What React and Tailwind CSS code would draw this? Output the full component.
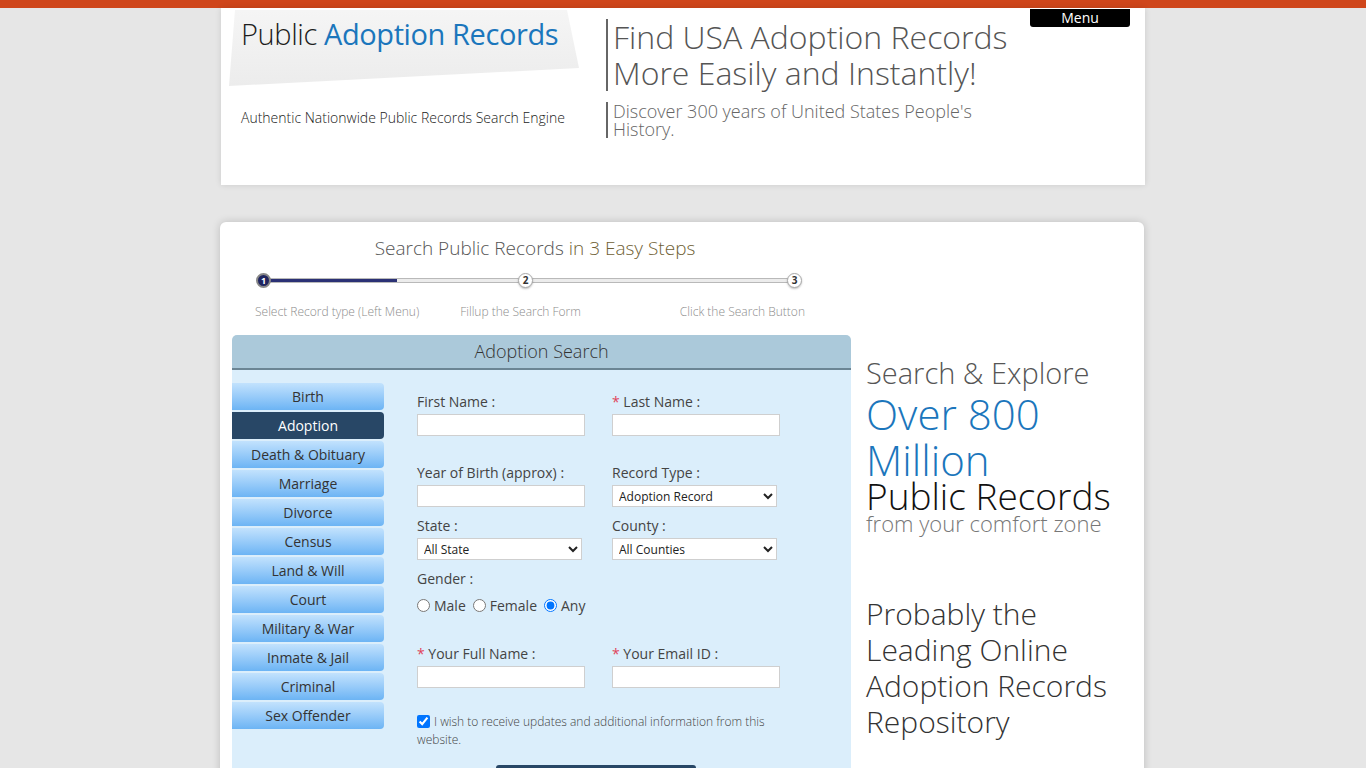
import React from 'react'

const menuItems = [
  'Birth',
  'Adoption',
  'Death & Obituary',
  'Marriage',
  'Divorce',
  'Census',
  'Land & Will',
  'Court',
  'Military & War',
  'Inmate & Jail',
  'Criminal',
  'Sex Offender',
]

const Label = ({ children, required }) => (
  <div className="h-[20px] text-[14px] leading-[20px] text-[#444]">
    {required && <span className="text-[#e0435a]">* </span>}
    {children}
  </div>
)

const Input = () => (
  <input type="text" className="mt-[2px] block h-[22px] w-[168px] border border-[#cfcfcf] bg-white px-1 text-[12px]" />
)

const Select = ({ options }) => (
  <select className="mt-[2px] block h-[22px] w-[165px] border border-[#cfcfcf] bg-white pl-[2px] text-[12px] text-[#222]">
    {options.map((o) => (
      <option key={o}>{o}</option>
    ))}
  </select>
)

const Header = () => (
  <header className="mx-auto flex h-[177px] w-[924px] bg-white shadow-[0_0_6px_rgba(0,0,0,0.12)]">
    <div className="relative w-[385px] shrink-0">
      <svg className="absolute left-[8px] top-[2px]" width="352" height="78" viewBox="0 0 352 78">
        <defs>
          <linearGradient id="paper" x1="0" y1="0" x2="0" y2="1">
            <stop offset="0" stopColor="#f5f5f5" />
            <stop offset="1" stopColor="#ececec" />
          </linearGradient>
        </defs>
        <polygon points="6,0 338,0 350,58 0,76" fill="url(#paper)" />
      </svg>
      <div className="relative pl-[20px] pt-[8px] text-[29px] leading-[36px] tracking-[-0.4px]">
        <span className="font-light text-[#1d1d1d]">Public </span>
        <span className="text-[#1b76bc]">Adoption Records</span>
      </div>
      <div className="relative mt-[55px] pl-[20px] text-[14px] font-light text-[#222]">
        Authentic Nationwide Public Records Search Engine
      </div>
    </div>
    <div className="w-[424px] shrink-0 pt-[11px]">
      <div className="border-l-2 border-[#666] pl-[5px] text-[32px] font-light leading-[36px] text-[#555]">
        Find USA Adoption Records
        <br />
        More Easily and Instantly!
      </div>
      <div className="mt-[11px] border-l-2 border-[#666] pl-[5px] text-[18px] font-light leading-[18px] text-[#666]">
        Discover 300 years of United States People's
        <br />
        History.
      </div>
    </div>
    <div>
      <button className="mt-[1px] block h-[18px] w-[100px] rounded-b-[3px] bg-black text-[14px] leading-[18px] text-white">
        Menu
      </button>
    </div>
  </header>
)

const Steps = () => (
  <div className="w-[606px]">
    <div className="text-center text-[19px] font-light leading-[26px] text-[#555]">
      Search Public Records <span className="text-[#6f5f35]">in 3 Easy Steps</span>
    </div>
    <div className="relative ml-[24px] mt-[12px] h-[16px] w-[548px]">
      <div className="absolute left-[4px] right-[4px] top-[5px] h-[5px] rounded-full border border-[#b9b9b9] bg-[#ececec]" />
      <div className="absolute left-[6px] top-[6px] h-[3px] w-[135px] bg-[#2b3175]" />
      <div className="absolute left-0 top-0 flex h-[15px] w-[15px] items-center justify-center rounded-full border-2 border-[#888] bg-[#1f2560] text-[9px] font-bold text-white">
        1
      </div>
      <div className="absolute left-[262px] top-0 flex h-[15px] w-[15px] items-center justify-center rounded-full border border-[#aaa] bg-white text-[10px] font-bold text-[#333] shadow-[0_1px_2px_rgba(0,0,0,0.25)]">
        2
      </div>
      <div className="absolute left-[531px] top-0 flex h-[15px] w-[15px] items-center justify-center rounded-full border border-[#aaa] bg-white text-[10px] font-bold text-[#333] shadow-[0_1px_2px_rgba(0,0,0,0.25)]">
        3
      </div>
    </div>
    <div className="ml-[23px] mt-[14px] flex w-[550px] text-[12px] font-light text-[#8c8c8c]">
      <span>Select Record type (Left Menu)</span>
      <span className="ml-[41px]">Fillup the Search Form</span>
      <span className="ml-auto">Click the Search Button</span>
    </div>
  </div>
)

const SearchPanel = () => (
  <div className="mt-[14px] w-[619px]">
    <div className="h-[35px] rounded-t-[5px] border-b-2 border-[#6b8594] bg-[#abc9da] text-center text-[18px] font-light leading-[32px] text-[#333]">
      Adoption Search
    </div>
    <div className="flex bg-[#dbeefb] pb-[20px] pt-[13px]">
      <nav className="flex w-[152px] shrink-0 flex-col gap-[2px]">
        {menuItems.map((item) => (
          <div
            key={item}
            className={
              item === 'Adoption'
                ? 'h-[27px] rounded-r-[4px] bg-[#284766] text-center text-[14px] leading-[28px] text-white'
                : 'h-[27px] rounded-r-[4px] bg-gradient-to-b from-[#c2e2fd] to-[#6cb4f4] text-center text-[14px] leading-[28px] text-[#333]'
            }
          >
            {item}
          </div>
        ))}
      </nav>
      <div className="pl-[33px] pt-[9px]">
        <div className="grid grid-cols-[168px_168px] gap-x-[27px]">
          <div>
            <Label>First Name :</Label>
            <Input />
          </div>
          <div>
            <Label required>Last Name :</Label>
            <Input />
          </div>
          <div className="mt-[27px]">
            <Label>Year of Birth (approx) :</Label>
            <Input />
          </div>
          <div className="mt-[27px]">
            <Label>Record Type :</Label>
            <Select options={['Adoption Record']} />
          </div>
          <div className="mt-[9px]">
            <Label>State :</Label>
            <Select options={['All State']} />
          </div>
          <div className="mt-[9px]">
            <Label>County :</Label>
            <Select options={['All Counties']} />
          </div>
        </div>
        <div className="mt-[9px]">
          <Label>Gender :</Label>
          <div className="mt-[6px] flex items-center text-[14px] text-[#444]">
            <label className="flex items-center">
              <input type="radio" name="g" className="m-0 mr-[4px] h-[13px] w-[13px]" />
              Male
            </label>
            <label className="ml-[7px] flex items-center">
              <input type="radio" name="g" className="m-0 mr-[4px] h-[13px] w-[13px]" />
              Female
            </label>
            <label className="ml-[7px] flex items-center">
              <input type="radio" name="g" defaultChecked className="m-0 mr-[4px] h-[13px] w-[13px]" />
              Any
            </label>
          </div>
        </div>
        <div className="mt-[28px] grid grid-cols-[168px_168px] gap-x-[27px]">
          <div>
            <Label required>Your Full Name :</Label>
            <Input />
          </div>
          <div>
            <Label required>Your Email ID :</Label>
            <Input />
          </div>
        </div>
        <div className="mt-[25px] w-[360px] text-[12px] font-light leading-[18px] text-[#444]">
          <input type="checkbox" defaultChecked className="mr-[4px] h-[13px] w-[13px] align-[-2px]" />
          I wish to receive updates and additional information from this website.
        </div>
        <button className="ml-[79px] mt-[16px] h-[36px] w-[200px] rounded-[3px] bg-[#284766] text-[16px] text-white">
          Search
        </button>
      </div>
    </div>
  </div>
)

const Promo = () => (
  <aside className="pl-[15px] pt-[120px] font-light">
    <div className="text-[29px] leading-[36px] text-[#555]">Search &amp; Explore</div>
    <div className="text-[42px] leading-[46px] text-[#1b76bc]">
      Over 800
      <br />
      Million
    </div>
    <div className="-mt-[4px] text-[37px] leading-[34px] text-[#111]">Public Records</div>
    <div className="-mt-[1px] text-[22px] leading-[22px] text-[#777]">from your comfort zone</div>
    <div className="mt-[62px] text-[30px] leading-[36px] text-[#333]">
      Probably the
      <br />
      Leading Online
      <br />
      Adoption Records
      <br />
      Repository
    </div>
  </aside>
)

export default function App() {
  return (
    <div className="min-h-screen bg-[#e6e6e6] font-['Open_Sans',_'Liberation_Sans',_sans-serif]">
      <div className="h-[8px] bg-[#cf461b]" />
      <Header />
      <main className="mx-auto mt-[37px] flex w-[924px] -translate-x-[1px] rounded-[6px] bg-white px-[12px] pb-[20px] pt-[13px] shadow-[0_0_8px_rgba(0,0,0,0.18)]">
        <div className="shrink-0">
          <Steps />
          <SearchPanel />
        </div>
        <Promo />
      </main>
    </div>
  )
}
